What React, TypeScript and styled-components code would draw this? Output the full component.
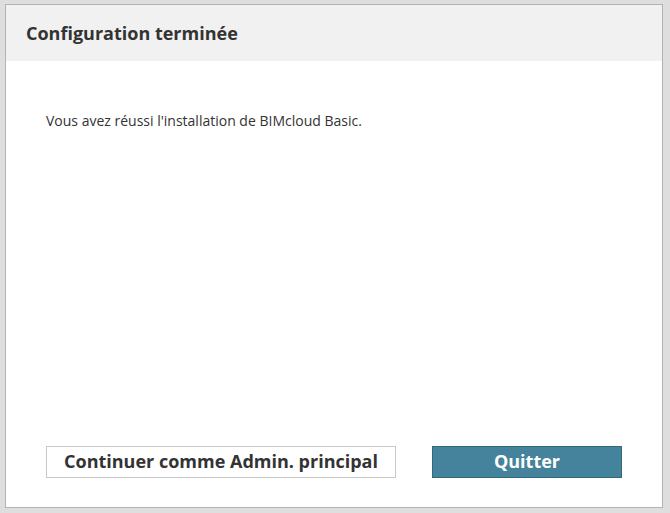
import React from "react";
import styled, { createGlobalStyle } from "styled-components";

const GlobalStyle = createGlobalStyle`
  html, body {
    margin: 0;
    padding: 0;
    background: #dedede;
    font-family: "Open Sans", "Noto Sans", sans-serif;
    color: #333333;
  }
`;

const Page = styled.div`
  width: 670px;
  height: 513px;
  box-sizing: border-box;
  padding: 4px 7px 5px 5px;
`;

const Dialog = styled.div`
  width: 658px;
  height: 504px;
  box-sizing: border-box;
  border: 1px solid #b3b3b3;
  background: #ffffff;
  display: flex;
  flex-direction: column;
`;

const Header = styled.div`
  height: 56px;
  background: #f1f1f1;
  display: flex;
  align-items: center;
  padding-left: 20px;
  padding-bottom: 1px;
  box-sizing: border-box;
`;

const Title = styled.h1`
  margin: 0;
  font-size: 18px;
  font-weight: 700;
  color: #333333;
`;

const Body = styled.div`
  flex: 1;
  padding: 50px 40px 0;
`;

const Message = styled.p`
  margin: 0;
  font-size: 14px;
  line-height: 19px;
  color: #333333;
`;

const Footer = styled.div`
  display: flex;
  justify-content: space-between;
  padding: 0 40px 29px;
`;

const Button = styled.button<{ primary?: boolean }>`
  height: 32px;
  width: ${p => (p.primary ? "190px" : "350px")};
  box-sizing: border-box;
  font-family: "Open Sans", "Noto Sans", sans-serif;
  font-size: 18px;
  font-weight: 700;
  padding: 0 0 2px;
  cursor: pointer;
  border: 1px solid ${p => (p.primary ? "#33697e" : "#c8c8c8")};
  background: ${p => (p.primary ? "#44839b" : "#ffffff")};
  color: ${p => (p.primary ? "#ffffff" : "#333333")};
`;

export default function App() {
  return (
    <>
      <GlobalStyle />
      <Page>
        <Dialog>
          <Header>
            <Title>Configuration terminée</Title>
          </Header>
          <Body>
            <Message>Vous avez réussi l'installation de BIMcloud Basic.</Message>
          </Body>
          <Footer>
            <Button>Continuer comme Admin. principal</Button>
            <Button primary>Quitter</Button>
          </Footer>
        </Dialog>
      </Page>
    </>
  );
}
